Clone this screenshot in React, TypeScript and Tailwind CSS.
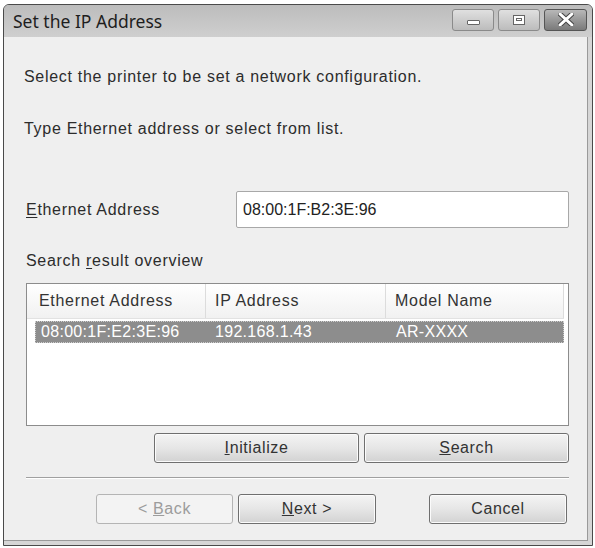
import React from "react";

const ui = { fontFamily: '"Liberation Sans", Arial, sans-serif' };
const title = { fontFamily: '"Noto Sans", "Open Sans", sans-serif' };

function Btn({
  children,
  className = "",
  disabled = false,
}: {
  children: React.ReactNode;
  className?: string;
  disabled?: boolean;
}) {
  return (
    <button
      disabled={disabled}
      className={
        "h-[30px] rounded-[3px] border text-[16px] tracking-[0.6px] flex items-center justify-center " +
        (disabled
          ? "border-[#b4b4b4] bg-[#f3f3f3] text-[#9c9c9c] "
          : "border-[#6f6f6f] bg-gradient-to-b from-[#f4f4f4] via-[#e6e6e6] to-[#d2d2d2] text-[#333] shadow-[inset_0_0_0_1px_#fbfbfb] ") +
        className
      }
    >
      {children}
    </button>
  );
}

function CaptionBtn({ kind }: { kind: "min" | "max" | "close" }) {
  const isClose = kind === "close";
  return (
    <div
      className={
        "h-[22px] rounded-[3px] border flex items-center justify-center " +
        (isClose
          ? "w-[43px] border-[#555] bg-gradient-to-b from-[#b8b8b8] to-[#7a7a7a]"
          : "w-[42px] border-[#8a8a8a] bg-gradient-to-b from-[#e0e0e0] to-[#bcbcbc]")
      }
    >
      {kind === "min" && (
        <div className="w-[13px] h-[5px] mt-[6px] rounded-[1px] border border-[#666] bg-white" />
      )}
      {kind === "max" && (
        <div className="w-[12px] h-[10px] border border-[#666] bg-white flex items-center justify-center">
          <div className="w-[6px] h-[3px] border border-[#666]" />
        </div>
      )}
      {isClose && (
        <svg width="16" height="13" viewBox="0 0 16 13">
          <path d="M2 1 L14 12 M14 1 L2 12" stroke="#444" strokeWidth="5" strokeLinecap="round" />
          <path d="M2 1 L14 12 M14 1 L2 12" stroke="#fff" strokeWidth="3" strokeLinecap="round" />
        </svg>
      )}
    </div>
  );
}

export default function App() {
  return (
    <div className="w-[595px] h-[548px] bg-white pl-[3px] pt-[4px]" style={ui}>
      <div className="w-[590px] h-[542px] border border-[#4a4a4a] rounded-t-[6px] bg-[#d6d6d6] flex flex-col overflow-hidden">
        {/* Title bar */}
        <div className="h-[32px] shrink-0 flex items-center justify-between pl-[9px] pr-[5px] bg-gradient-to-b from-[#bcbcbc] to-[#cfcfcf]">
          <span className="text-[17.5px] text-[#1e1e1e]" style={title}>
            Set the IP Address
          </span>
          <div className="flex gap-[4px] items-center mt-[-3px]">
            <CaptionBtn kind="min" />
            <CaptionBtn kind="max" />
            <CaptionBtn kind="close" />
          </div>
        </div>

        {/* Client area */}
        <div className="flex-1 bg-[#efefef] mr-[4px] mb-[4px] border-r border-b border-[#9a9a9a] pl-[22px] pr-[18px] text-[16px] tracking-[0.7px] text-[#2c2c2c]">
          <p className="mt-[31px] -ml-[2px] leading-[18px]">
            Select the printer to be set a network configuration.
          </p>
          <p className="mt-[34px] -ml-[2px] leading-[18px]">
            Type Ethernet address or select from list.
          </p>

          <div className="mt-[53px] h-[37px] flex items-center">
            <span className="w-[210px]">
              <u className="underline-offset-2">E</u>thernet Address
            </span>
            <div className="flex-1 h-full rounded-[2px] border border-[#a8a8a8] bg-white flex items-center pl-[6px] tracking-normal text-[#222]">
              08:00:1F:B2:3E:96
            </div>
          </div>

          <p className="mt-[24px] leading-[18px]">
            Search <u className="underline-offset-2">r</u>esult overview
          </p>

          {/* List view */}
          <div className="mt-[13px] h-[143px] border border-[#8c8c8c] bg-white pr-[4px]">
            <div className="h-[35px] flex bg-gradient-to-b from-white to-[#f1f1f1] border-b border-[#e2e2e2] text-[#333]">
              <div className="w-[179px] border-r border-[#dcdcdc] pl-[12px] flex items-center">
                Ethernet Address
              </div>
              <div className="w-[180px] border-r border-[#dcdcdc] pl-[9px] flex items-center">
                IP Address
              </div>
              <div className="flex-1 border-r border-[#dcdcdc] pl-[9px] flex items-center">
                Model Name
              </div>
            </div>
            <div className="ml-[8px] mt-[2px] h-[22px] flex items-center bg-[#8d8d8d] border border-dotted border-[#cfcfcf] text-white tracking-[0.3px]">
              <div className="w-[171px] pl-[5px]">08:00:1F:E2:3E:96</div>
              <div className="w-[180px] pl-[8px]">192.168.1.43</div>
              <div className="flex-1 pl-[9px]">AR-XXXX</div>
            </div>
          </div>

          <div className="mt-[7px] flex justify-end gap-[5px]">
            <Btn className="w-[205px]">
              <span>
                <u>I</u>nitialize
              </span>
            </Btn>
            <Btn className="w-[205px]">
              <span>
                <u>S</u>earch
              </span>
            </Btn>
          </div>

          <div className="mt-[14px] h-[2px] border-t border-[#a0a0a0] border-b-white border-b" />

          <div className="mt-[15px] flex">
            <Btn disabled className="ml-[70px] w-[137px]">
              <span>
                &lt; <u>B</u>ack
              </span>
            </Btn>
            <Btn className="ml-[5px] w-[138px]">
              <span>
                <u>N</u>ext &gt;
              </span>
            </Btn>
            <Btn className="ml-auto mr-[2px] w-[138px]">Cancel</Btn>
          </div>
        </div>
      </div>
    </div>
  );
}
